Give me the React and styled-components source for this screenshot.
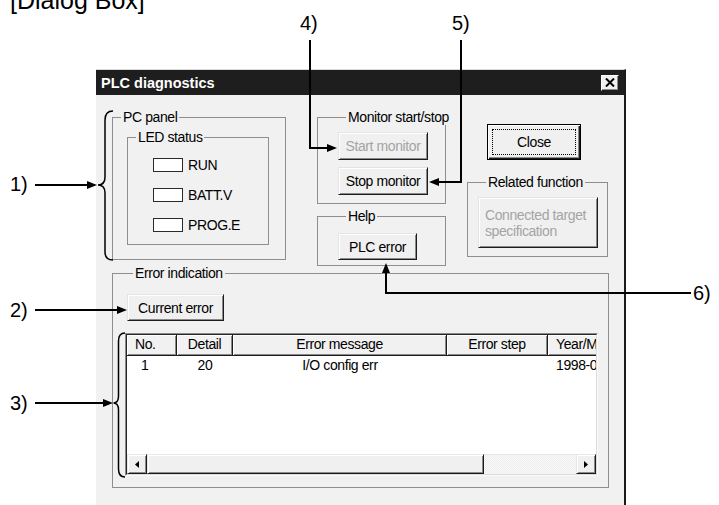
import styled, { createGlobalStyle } from "styled-components"

const UI_FONT = `"Liberation Sans", Arial, sans-serif`

const GlobalStyle = createGlobalStyle`
  html, body {
    margin: 0;
    padding: 0;
    background: #fff;
  }
  body {
    font-family: "Liberation Sans", Arial, sans-serif;
  }
`

const columns = [
  { title: "No.", width: 50, head: "left", cell: "left", pad: 14 },
  { title: "Detail", width: 56, head: "center", cell: "center", pad: 0 },
  { title: "Error message", width: 214, head: "center", cell: "center", pad: 0 },
  { title: "Error step", width: 101, head: "center", cell: "center", pad: 0 },
  { title: "Year/Month/Day Time", width: 140, head: "left", cell: "left", pad: 8 },
]

const errors = [
  ["1", "20", "I/O config err", "", "1998-09-10 14:32:05"],
]

const leds = ["RUN", "BATT.V", "PROG.E"]

const callouts = [
  { text: "1)", x: 10, y: 174 },
  { text: "2)", x: 10, y: 300 },
  { text: "3)", x: 10, y: 393 },
  { text: "4)", x: 300, y: 13 },
  { text: "5)", x: 452, y: 13 },
  { text: "6)", x: 693, y: 283 },
]

// arrowheads: tip position and direction
const heads = [
  { x: 97, y: 185, dir: "right" },
  { x: 127, y: 310, dir: "right" },
  { x: 113, y: 403, dir: "right" },
  { x: 337, y: 148, dir: "right" },
  { x: 429, y: 182, dir: "left" },
  { x: 386, y: 263, dir: "up" },
]

function headPoints({ x, y, dir }) {
  if (dir === "left") return `${x},${y} ${x + 10},${y - 4} ${x + 10},${y + 4}`
  if (dir === "up") return `${x},${y} ${x - 4},${y + 10} ${x + 4},${y + 10}`
  return `${x},${y} ${x - 10},${y - 4} ${x - 10},${y + 4}`
}

export default function App() {
  return (
    <>
      <GlobalStyle />
      <Figure>
        <Caption>[Dialog Box]</Caption>

        <Dialog>
          <TitleBar>
            <Title>PLC diagnostics</Title>
            <CloseBox aria-label="Close">
              <svg width="10" height="9" viewBox="0 0 10 9">
                <path d="M1 0.5L9 8.5M9 0.5L1 8.5" stroke="#000" strokeWidth="2" />
              </svg>
            </CloseBox>
          </TitleBar>

          <Body>
            <TopRow>
              <GroupBox $w={174} $h={143}>
                <GroupLabel>PC panel</GroupLabel>
                <LedGroup>
                  <GroupLabel>LED status</GroupLabel>
                  <LedList>
                    {leds.map((name) => (
                      <LedRow key={name}>
                        <Led />
                        <span>{name}</span>
                      </LedRow>
                    ))}
                  </LedList>
                </LedGroup>
              </GroupBox>

              <Column $ml={31}>
                <GroupBox $w={129} $pl={20} $pb={8}>
                  <GroupLabel>Monitor start/stop</GroupLabel>
                  <ButtonStack>
                    <Button $w={90} disabled>Start monitor</Button>
                    <Button $w={90}>Stop monitor</Button>
                  </ButtonStack>
                </GroupBox>
                <GroupBox $w={129} $pl={20} $pb={5} $mt={12}>
                  <GroupLabel>Help</GroupLabel>
                  <ButtonStack $mt={9}>
                    <Button $w={79} $h={27}>PLC error</Button>
                  </ButtonStack>
                </GroupBox>
              </Column>

              <Column $ml={21}>
                <DefaultButton $w={94} $h={36}>
                  <FocusRing>Close</FocusRing>
                </DefaultButton>
                <GroupBox $w={141} $pl={10} $pb={8} $mt={22}>
                  <GroupLabel>Related function</GroupLabel>
                  <ButtonStack>
                    <Button $w={120} $h={51} $left disabled>
                      Connected target<br />specification
                    </Button>
                  </ButtonStack>
                </GroupBox>
              </Column>
            </TopRow>

            <GroupBox $w={497} $pl={12} $pb={11} $mt={7}>
              <GroupLabel>Error indication</GroupLabel>
              <ButtonStack $mt={13} $ml={2}>
                <Button $w={97} $h={27}>Current error</Button>
              </ButtonStack>
              <ListView>
                <ListInner>
                  <HeaderRow>
                    {columns.map((c) => (
                      <HeaderCell key={c.title} $w={c.width} $align={c.head}>
                        {c.title}
                      </HeaderCell>
                    ))}
                  </HeaderRow>
                  {errors.map((row) => (
                    <DataRow key={row[0]}>
                      {row.map((v, i) => (
                        <DataCell key={i} $w={columns[i].width} $align={columns[i].cell} $pad={columns[i].pad}>
                          {v}
                        </DataCell>
                      ))}
                    </DataRow>
                  ))}
                  <ListFill />
                  <HScroll>
                    <ScrollButton>
                      <svg width="4" height="7" viewBox="0 0 4 7"><polygon points="4,0 0,3.5 4,7" fill="#000" /></svg>
                    </ScrollButton>
                    <Thumb />
                    <Track />
                    <ScrollButton>
                      <svg width="4" height="7" viewBox="0 0 4 7"><polygon points="0,0 4,3.5 0,7" fill="#000" /></svg>
                    </ScrollButton>
                  </HScroll>
                </ListInner>
              </ListView>
            </GroupBox>
          </Body>
        </Dialog>

        <Overlay width="719" height="505" viewBox="0 0 719 505">
          <g stroke="#000" strokeWidth="2" fill="none">
            <path d="M35 185H89" />
            <path d="M35 310H119" />
            <path d="M35 403H105" />
            <path d="M310 40V148H329" />
            <path d="M461 40V182H437" />
            <path d="M691 293H386V271" />
          </g>
          <g stroke="#000" strokeWidth="1.5" fill="none">
            <path d="M113 111C107 111 105 114 105 120V177C105 182 103 185 98 185C103 185 105 188 105 193V252C105 257 107 260 113 260" />
            <path d="M125 333C120 333 118.5 336 118.5 341V396C118.5 400.5 117 403 113.5 403C117 403 118.5 405.5 118.5 410V469C118.5 474 120 477 125 477" />
          </g>
          <g fill="#000">
            {heads.map((h, i) => (
              <polygon key={i} points={headPoints(h)} />
            ))}
          </g>
        </Overlay>

        {callouts.map((c) => (
          <Callout key={c.text} $x={c.x} $y={c.y}>{c.text}</Callout>
        ))}
      </Figure>
    </>
  )
}

const Figure = styled.div`
  position: relative;
  width: 719px;
  height: 505px;
  overflow: hidden;
  background: #fff;
`

const Caption = styled.div`
  margin: -12px 0 0 10px;
  font: 25px/25px "Liberation Sans", Arial, sans-serif;
  color: #000;
`

const Dialog = styled.div`
  margin: 56px 0 0 96px;
  width: 528px;
  height: 450px;
  background: #f1f1f1;
  border-top: 1px solid #d8d8d8;
  border-right: 2px solid #1a1a1a;
  font-family: ${UI_FONT};
  font-size: 14px;
  letter-spacing: -0.4px;
  color: #000;
`

const TitleBar = styled.div`
  height: 25px;
  background: #1e1e1e;
  display: flex;
  align-items: center;
  justify-content: space-between;
  padding: 0 5px 0 5px;
`

const Title = styled.span`
  font: bold 14.5px "Liberation Sans", Arial, sans-serif;
  letter-spacing: 0;
  color: #fff;
`

const CloseBox = styled.div`
  box-sizing: border-box;
  width: 18px;
  height: 16px;
  display: flex;
  align-items: center;
  justify-content: center;
  background: #f0f0f0;
  border: 1px solid;
  border-color: #fff #1f1f1f #1f1f1f #fff;
  box-shadow: inset -1px -1px 0 #8a8a8a;
`

const Body = styled.div`
  padding: 22px 0 0 16px;
`

const TopRow = styled.div`
  display: flex;
  align-items: flex-start;
`

const Column = styled.div`
  display: flex;
  flex-direction: column;
  align-items: flex-end;
  margin-left: ${(p) => p.$ml || 0}px;

  & > button {
    margin: 7px 27px 0 0;
  }
`

const GroupBox = styled.div`
  box-sizing: border-box;
  width: ${(p) => p.$w}px;
  ${(p) => p.$h && `height: ${p.$h}px;`}
  margin-top: ${(p) => p.$mt || 0}px;
  padding: 0 0 ${(p) => p.$pb || 0}px ${(p) => p.$pl || 0}px;
  border: 1px solid #8e8e8e;
`

const GroupLabel = styled.div`
  display: table;
  margin: -9px 0 0 8px;
  padding: 0 2px;
  line-height: 16px;
  background: #f1f1f1;
  white-space: nowrap;
`

const LedGroup = styled(GroupBox).attrs({ $w: 142, $h: 108 })`
  margin: 12px 0 0 14px;
  padding: 0;
`

const LedList = styled.div`
  display: flex;
  flex-direction: column;
  gap: 16px;
  padding: 13px 0 0 25px;
`

const LedRow = styled.div`
  display: flex;
  align-items: center;
  gap: 5px;
  height: 14px;
  line-height: 16px;
`

const Led = styled.span`
  box-sizing: border-box;
  width: 30px;
  height: 14px;
  background: #fff;
  border: 1px solid #2a2a2a;
`

const ButtonStack = styled.div`
  display: flex;
  flex-direction: column;
  gap: 7px;
  margin: ${(p) => p.$mt ?? 7}px 0 0 ${(p) => p.$ml || 0}px;
`

const Button = styled.button`
  box-sizing: border-box;
  width: ${(p) => p.$w}px;
  height: ${(p) => p.$h || 28}px;
  padding: ${(p) => (p.$left ? "0 6px" : "0")};
  text-align: ${(p) => (p.$left ? "left" : "center")};
  font-family: ${UI_FONT};
  font-size: 14px;
  letter-spacing: -0.4px;
  line-height: 16px;
  white-space: nowrap;
  color: #000;
  background: #f0f0f0;
  border: 1px solid;
  border-color: #e4e4e4 #1c1c1c #1c1c1c #e4e4e4;
  box-shadow: inset 1px 1px 0 #fff, inset -1px -1px 0 #8a8a8a;

  &:disabled {
    color: #a4a4a4;
  }
`

const DefaultButton = styled(Button)`
  padding: 0;
  border: 1px solid #000;
  box-shadow: inset 1px 1px 0 #fff, inset -1px -1px 0 #1c1c1c, inset -2px -2px 0 #8a8a8a;
`

const FocusRing = styled.span`
  display: flex;
  align-items: center;
  justify-content: center;
  box-sizing: border-box;
  margin: 0 4px;
  height: 26px;
  border: 1px dotted #000;
`

const ListView = styled.div`
  box-sizing: border-box;
  width: 473px;
  height: 143px;
  margin-top: 12px;
  border: 1px solid;
  border-color: #8a8a8a #fafafa #fafafa #8a8a8a;
`

const ListInner = styled.div`
  box-sizing: border-box;
  height: 100%;
  display: flex;
  flex-direction: column;
  overflow: hidden;
  background: #fff;
  border: 1px solid;
  border-color: #262626 #dcdcdc #dcdcdc #262626;
`

const HeaderRow = styled.div`
  display: flex;
  height: 21px;
  flex: none;
`

const HeaderCell = styled.div`
  box-sizing: border-box;
  flex: none;
  width: ${(p) => p.$w}px;
  padding: 0 ${(p) => (p.$align === "left" ? "8px" : "0")};
  text-align: ${(p) => p.$align};
  line-height: 19px;
  white-space: nowrap;
  overflow: hidden;
  background: #f1f1f1;
  border-right: 1px solid #1c1c1c;
  border-bottom: 1px solid #1c1c1c;
  box-shadow: inset 1px 1px 0 #fff, inset -1px -1px 0 #8a8a8a;
`

const DataRow = styled.div`
  display: flex;
  height: 17px;
  flex: none;
  padding-top: 1px;
`

const DataCell = styled.div`
  box-sizing: border-box;
  flex: none;
  width: ${(p) => p.$w}px;
  padding-left: ${(p) => p.$pad}px;
  text-align: ${(p) => p.$align};
  line-height: 16px;
  white-space: nowrap;
  overflow: hidden;
`

const ListFill = styled.div`
  flex: 1;
`

const HScroll = styled.div`
  flex: none;
  display: grid;
  grid-template-columns: 20px 337px 92px 20px;
  height: 20px;
`

const raised = `
  box-sizing: border-box;
  background: #f0f0f0;
  border: 1px solid;
  border-color: #e8e8e8 #1c1c1c #1c1c1c #e8e8e8;
  box-shadow: inset 1px 1px 0 #fff, inset -1px -1px 0 #8a8a8a;
`

const ScrollButton = styled.div`
  ${raised}
  display: flex;
  align-items: center;
  justify-content: center;
`

const Thumb = styled.div`
  ${raised}
`

const Track = styled.div`
  background-color: #f6f6f6;
  background-image: repeating-conic-gradient(#ececec 0 25%, #fbfbfb 0 50%);
  background-size: 2px 2px;
  border-top: 1px solid #e6e6e6;
`

const Overlay = styled.svg`
  position: absolute;
  left: 0;
  top: 0;
  pointer-events: none;
`

const Callout = styled.span`
  position: absolute;
  left: ${(p) => p.$x}px;
  top: ${(p) => p.$y}px;
  font: 20px/20px "Liberation Sans", Arial, sans-serif;
  color: #000;
`
